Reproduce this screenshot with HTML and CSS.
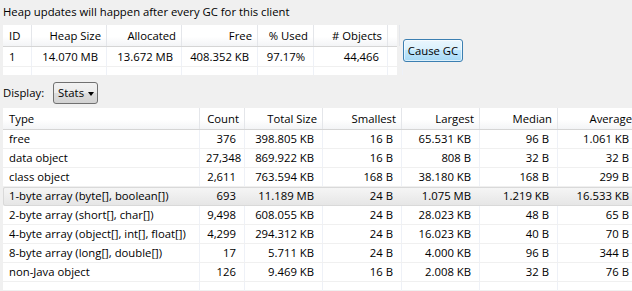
FILE: index.html
```html
<!DOCTYPE html>
<html lang="en">
<head>
  <meta charset="UTF-8" />
  <title>Heap</title>
  <link rel="stylesheet" href="styles.css">
</head>
<body>
  <div class="status">Heap updates will happen after every GC for this client</div>

  <div class="summary">
    <div class="grid heap-grid">
      <div class="row head">
        <div class="cell left">ID</div>
        <div class="cell">Heap Size</div>
        <div class="cell">Allocated</div>
        <div class="cell">Free</div>
        <div class="cell">% Used</div>
        <div class="cell"># Objects</div>
        <div class="cell"></div>
      </div>
      <div class="row">
        <div class="cell left">1</div>
        <div class="cell">14.070 MB</div>
        <div class="cell">13.672 MB</div>
        <div class="cell">408.352 KB</div>
        <div class="cell">97.17%</div>
        <div class="cell">44,466</div>
        <div class="cell"></div>
      </div>
      <div class="row filler">
        <div class="cell"></div><div class="cell"></div><div class="cell"></div><div class="cell"></div>
        <div class="cell"></div><div class="cell"></div><div class="cell"></div>
      </div>
    </div>
    <button class="gc-button">Cause GC</button>
  </div>

  <div class="display">
    <span>Display:</span>
    <div class="combo">Stats<span class="arrow"></span></div>
  </div>

  <div class="grid stats-grid">
    <div class="row head">
      <div class="cell left">Type</div>
      <div class="cell">Count</div>
      <div class="cell">Total Size</div>
      <div class="cell">Smallest</div>
      <div class="cell">Largest</div>
      <div class="cell">Median</div>
      <div class="cell">Average</div>
    </div>
    <div class="row">
      <div class="cell left">free</div><div class="cell">376</div><div class="cell">398.805 KB</div>
      <div class="cell">16 B</div><div class="cell">65.531 KB</div><div class="cell">96 B</div><div class="cell">1.061 KB</div>
    </div>
    <div class="row">
      <div class="cell left">data object</div><div class="cell">27,348</div><div class="cell">869.922 KB</div>
      <div class="cell">16 B</div><div class="cell">808 B</div><div class="cell">32 B</div><div class="cell">32 B</div>
    </div>
    <div class="row">
      <div class="cell left">class object</div><div class="cell">2,611</div><div class="cell">763.594 KB</div>
      <div class="cell">168 B</div><div class="cell">38.180 KB</div><div class="cell">168 B</div><div class="cell">299 B</div>
    </div>
    <div class="row selected">
      <div class="cell left">1-byte array (byte[], boolean[])</div><div class="cell">693</div><div class="cell">11.189 MB</div>
      <div class="cell">24 B</div><div class="cell">1.075 MB</div><div class="cell">1.219 KB</div><div class="cell">16.533 KB</div>
    </div>
    <div class="row">
      <div class="cell left">2-byte array (short[], char[])</div><div class="cell">9,498</div><div class="cell">608.055 KB</div>
      <div class="cell">24 B</div><div class="cell">28.023 KB</div><div class="cell">48 B</div><div class="cell">65 B</div>
    </div>
    <div class="row">
      <div class="cell left">4-byte array (object[], int[], float[])</div><div class="cell">4,299</div><div class="cell">294.312 KB</div>
      <div class="cell">24 B</div><div class="cell">16.023 KB</div><div class="cell">40 B</div><div class="cell">70 B</div>
    </div>
    <div class="row">
      <div class="cell left">8-byte array (long[], double[])</div><div class="cell">17</div><div class="cell">5.711 KB</div>
      <div class="cell">24 B</div><div class="cell">4.000 KB</div><div class="cell">96 B</div><div class="cell">344 B</div>
    </div>
    <div class="row">
      <div class="cell left">non-Java object</div><div class="cell">126</div><div class="cell">9.469 KB</div>
      <div class="cell">16 B</div><div class="cell">2.008 KB</div><div class="cell">32 B</div><div class="cell">76 B</div>
    </div>
    <div class="row filler">
      <div class="cell"></div><div class="cell"></div><div class="cell"></div><div class="cell"></div>
      <div class="cell"></div><div class="cell"></div><div class="cell"></div>
    </div>
  </div>
</body>
</html>
```

FILE: styles.css
```css
*, *::before, *::after { box-sizing: border-box; }
body {
  margin: 0;
  height: 291px;
  overflow: hidden;
  font-family: 'Open Sans', 'Noto Sans', sans-serif;
  font-size: 11.3px;
  color: #000;
  background: #f0f0f0;
}
.status {
  padding: 4px 3px 0;
  height: 25px;
  line-height: 16px;
}

/* top summary + button */
.summary {
  display: flex;
  align-items: center;
  gap: 6px;
  padding-left: 3px;
}
.grid {
  background: #fff;
}
.row {
  display: grid;
  height: 19px;
  line-height: 18px;
  border-bottom: 1px solid #f0f0f0;
}
.heap-grid .row {
  grid-template-columns: 29px 75px 75px 76px 56px 74px 9px;
  width: 394px;
  height: 20px;
  line-height: 19px;
}
.heap-grid .row.filler { height: 8px; border-bottom: none; }
.cell {
  border-right: 1px solid #eef1f7;
  padding: 0 8px 0 6px;
  text-align: right;
  white-space: nowrap;
  overflow: hidden;
}
.cell.left { text-align: left; }
.row.head {
  height: 22px;
  line-height: 21px;
  background: linear-gradient(#fff, #fff 55%, #f3f4f6);
  border-bottom: 1px solid #d5d5d5;
}
.row.head .cell {
  padding-right: 5px;
  border-right-color: #e4e6ea;
}
.heap-grid .row.head { height: 22px; line-height: 21px; }

.gc-button {
  width: 60px;
  height: 23px;
  padding: 0;
  font: inherit;
  color: #000;
  border: 1px solid #3c7fb1;
  border-radius: 3px;
  background: linear-gradient(#eaf6fd, #d9f0fc 50%, #bee6fd 50%, #a7d9f5);
  box-shadow: inset 0 0 0 1px rgba(255,255,255,0.6);
}

/* display combo */
.display {
  display: flex;
  align-items: center;
  gap: 9px;
  height: 33px;
  padding: 4px 3px 2px;
}
.combo {
  position: relative;
  width: 45px;
  height: 22px;
  line-height: 20px;
  padding-left: 4px;
  border: 1px solid #707070;
  border-radius: 3px;
  background: linear-gradient(#f2f2f2, #ebebeb 50%, #dddddd 50%, #d2d2d2);
}
.combo .arrow {
  position: absolute;
  right: 3px;
  top: 9px;
  border-left: 3px solid transparent;
  border-right: 3px solid transparent;
  border-top: 4px solid #000;
}

/* stats table */
.stats-grid {
  margin-left: 3px;
  height: 182px;
}
.stats-grid .row {
  grid-template-columns: 197px 45px 78px 79px 78px 78px 80px;
  width: 655px;
}
.stats-grid .row.head { height: 22px; }
.row.selected {
  background: linear-gradient(#f6f6f6, #e6e6e6);
  border-bottom-color: #d9d9d9;
  border-radius: 2px;
  box-shadow: inset 0 1px 0 #d9d9d9, inset 1px 0 0 #d9d9d9;
}
.row.selected .cell { border-right-color: transparent; }
```
